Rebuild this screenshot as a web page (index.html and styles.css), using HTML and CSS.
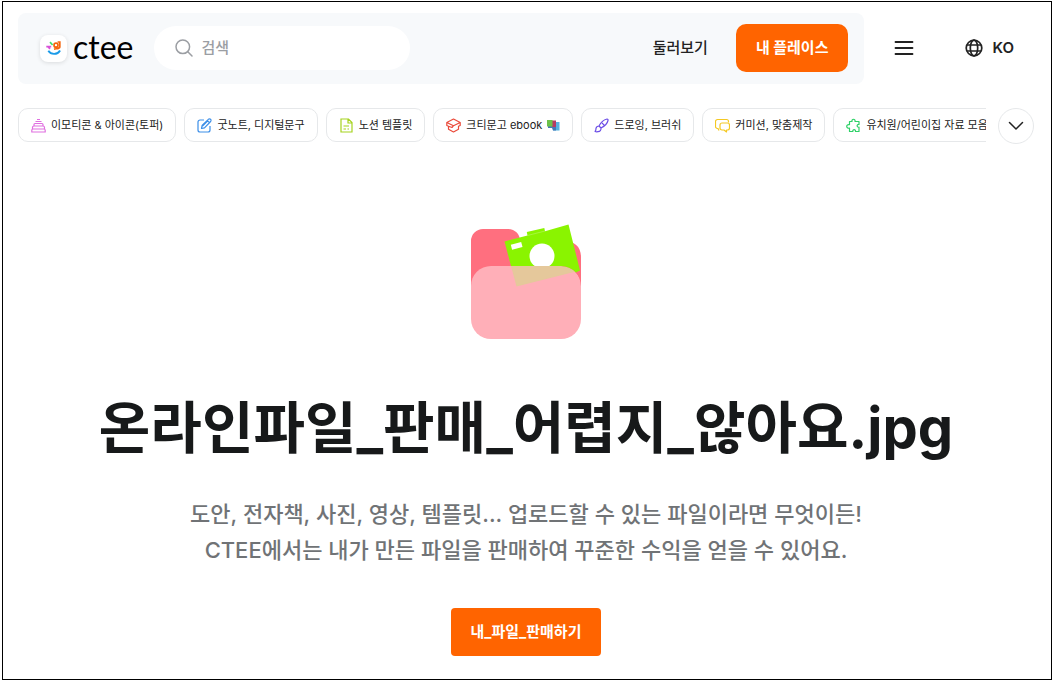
FILE: index.html
```html
<!DOCTYPE html>
<html lang="ko">
<head>
<meta charset="utf-8">
<meta name="viewport" content="width=device-width, initial-scale=1">
<title>CTEE</title>
<link rel="stylesheet" href="styles.css">
</head>
<body>
<div class="page">
  <header class="header">
    <div class="header-panel">
      <a class="logo" href="#">
        <span class="logo-mark">
          <svg width="18" height="18" viewBox="0 0 18 18" fill="none" stroke-width="1.7">
            <path d="M5 3.2 7.6 6" stroke="#3ddc74"/>
            <path d="M1.3 7.7h4.9M3 7.7l2 2.2" stroke="#d851d8"/>
            <circle cx="11" cy="6.2" r="2" stroke="#f4640c"/>
            <path d="M9 10.1c2.5-.6 5.5-.2 5.8-2.1V2.2M12.6 3h2.2" stroke="#f4640c"/>
            <path d="M3.3 11.8c2.7 4.2 9 4.2 11.8-.4" stroke="#1b9be8" stroke-width="1.9"/>
          </svg>
        </span>
        <span class="logo-text">ctee</span>
      </a>
      <label class="search">
        <svg width="18" height="18" viewBox="0 0 18 18" fill="none" stroke="#9b9ea3" stroke-width="1.5" stroke-linecap="round"><circle cx="7.8" cy="7.8" r="6.8"/><path d="m12.8 12.8 4.2 4.2"/></svg>
        <input class="search-input" type="search" placeholder="검색" aria-label="검색">
      </label>
      <nav class="nav">
        <a class="nav-link" href="#">둘러보기</a>
        <button class="place-button" type="button">내 플레이스</button>
      </nav>
    </div>
    <div class="header-tools">
      <button class="icon-button" type="button" aria-label="메뉴">
        <svg width="20" height="16" viewBox="0 0 20 16" stroke="#222" stroke-width="1.8" stroke-linecap="round"><path d="M1.5 2h17M1.5 8h17M1.5 14h17"/></svg>
      </button>
      <button class="language" type="button">
        <svg width="18" height="18" viewBox="0 0 18 18" fill="none" stroke="#222" stroke-width="1.7"><circle cx="9" cy="9" r="7.8"/><ellipse cx="9" cy="9" rx="3.7" ry="7.8"/><path d="M2 6h14M2 12h14"/></svg>
        <span>KO</span>
      </button>
    </div>
  </header>

  <div class="categories">
    <div class="chips">
      <a class="chip" href="#">
        <svg class="chip-icon" viewBox="0 0 15 15" fill="none" stroke="#e070e0" stroke-width="1.200"><path d="M6 1.500h3M4.500 3.500h6M4 5.500h7a1 1 0 0 1 1 1v1.500H3V6.500a1 1 0 0 1 1-1ZM3 8h9a1.500 1.500 0 0 1 1.500 1.500V11h-12V9.500A1.500 1.500 0 0 1 3 8ZM2 11h11a1.200 1.200 0 0 1 1.200 1.200V14H.8v-1.800A1.200 1.200 0 0 1 2 11Z"/></svg>
        <span>이모티콘 &amp; 아이콘(토퍼)</span>
      </a>
      <a class="chip" href="#">
        <svg class="chip-icon" viewBox="0 0 15 15" fill="none" stroke="#3d8fe8" stroke-width="1.200" stroke-linejoin="round"><path d="M7 2H3a2 2 0 0 0-2 2v8a2 2 0 0 0 2 2h8a2 2 0 0 0 2-2V8"/><path d="m4.500 10.500.6-3L11.300 1.300a1.300 1.300 0 0 1 2.300 2.200L7.500 9.800ZM10.200 2.500l2.200 2.200M5.500 8l5-5"/></svg>
        <span>굿노트, 디지털문구</span>
      </a>
      <a class="chip" href="#">
        <svg class="chip-icon" viewBox="0 0 15 15" fill="none" stroke="#a6d31f" stroke-width="1.200"><path d="M2 1h7.500L13 4.500V14H2ZM9 1v4h4M4.500 8h5.500M4.500 11h2.500M8.500 11H10"/></svg>
        <span>노션 템플릿</span>
      </a>
      <a class="chip" href="#">
        <svg class="chip-icon" viewBox="0 0 15 15" fill="none" stroke="#ea4a3a" stroke-width="1.200" stroke-linejoin="round"><path d="M.8 4.500 7.500 1l6.700 3.500-6.700 3.200ZM.8 4.500v3l1.700.8v3l5 2.700 5-2.700v-3l1.700-.8v-3M2.500 8.300l3.500 1.200 1.500-1.800"/></svg>
        <span>크티문고 ebook</span>
        <svg class="chip-books" viewBox="0 0 13 12" role="img" aria-label="책"><path fill="#55b2e0" d="M7 3h5.500v8.500H6z"/><path fill="#4778b5" d="M1 7h8v4.500H6L5 9H1z"/><path fill="#b63c63" d="M4.500 1.500H9V8H5z"/><path fill="#6cc24a" d="M0 1h5.500v6.500H0z"/></svg>
      </a>
      <a class="chip" href="#">
        <svg class="chip-icon" viewBox="0 0 15 15" fill="none" stroke="#6b4de6" stroke-width="1.200" stroke-linejoin="round"><path d="M5 8c1.500-3 5-6.300 8-7 1 .1 1.200.8 1 1.500-.7 3-4 6-7 7.500ZM8 5l2.200 2.200M5 8l2 2c.2 2-1 3.500-3 3.700-1.300.2-2.500 0-3-.4 1.200-.7.700-1.800 1-3C2.300 9 3.500 8 5 8Z"/></svg>
        <span>드로잉, 브러쉬</span>
      </a>
      <a class="chip" href="#">
        <svg class="chip-icon" viewBox="0 0 15 15" fill="none" stroke="#f4c822" stroke-width="1.200" stroke-linejoin="round"><path d="M4 12.500 3 10.500H2.500a2 2 0 0 1-2-2v-5a2 2 0 0 1 2-2h9a2 2 0 0 1 2 2v1"/><path d="M7 5h5.500a2 2 0 0 1 2 2v3a2 2 0 0 1-2 2h-1v2l-2.500-2H7a2 2 0 0 1-2-2V7a2 2 0 0 1 2-2Z"/></svg>
        <span>커미션, 맞춤제작</span>
      </a>
      <a class="chip" href="#">
        <svg class="chip-icon" viewBox="0 0 15 15" fill="none" stroke="#2ed167" stroke-width="1.200" stroke-linejoin="round"><path d="M3.500 3.500H6c-.8-3 3.800-3 3 0h4v3c-2.500-.5-2.500 3.200 0 2.700v4.300H9.500c.4-2.500-3.100-2.500-2.700 0H3.500v-3.300c-3.700.7-3.700-4.300 0-3.500Z"/></svg>
        <span>유치원/어린이집 자료 모음</span>
      </a>
    </div>
    <button class="more-button" type="button" aria-label="더보기">
      <svg width="16" height="10" viewBox="0 0 16 10" fill="none" stroke="#222" stroke-width="1.500" stroke-linecap="round" stroke-linejoin="round"><path d="m1.500 1.500 6.500 6.500 6.500-6.500"/></svg>
    </button>
  </div>

  <main class="hero">
    <svg class="hero-art" width="110" height="116" viewBox="0 0 110 116" aria-hidden="true">
      <path fill="#ff6f7f" d="M0 17A12 12 0 0 1 12 5h24c8 0 13 5 13 12h43c12 0 18 6 18 16v40H0Z"/>
      <path fill="#8af400" d="m33.500 17.500 23-6-.7-3.500 17.500-4 .7 3.200L97.500.5l11.500 46-63.500 16Z"/>
      <path fill="none" stroke="#b8f766" stroke-width=".6" d="m56.500 11.500 17.500-4.500"/>
      <path fill="#fff" d="m39.800 20.700 10.400-2.700 1.300 5-10.400 2.800Z"/>
      <circle cx="71" cy="32" r="12.500" fill="#fff"/>
      <path fill="#ffafb8" d="M20 42h70a20 20 0 0 1 20 20v33a20 20 0 0 1-20 20H20A20 20 0 0 1 0 95V62a20 20 0 0 1 20-20Z"/>
      <path fill="#e5c89b" d="M40 42h67l2 4.500-63.500 16Z"/>
      <path fill="#ff6f7f" d="M90 42h20v20a20 20 0 0 0-20-20Z"/>
      <path fill="#8af400" d="M90 42h17.900l1.100 4.500-4.200 2A20 20 0 0 0 90 42Z"/>
    </svg>
    <h1 class="hero-title">온라인파일_판매_어렵지_않아요.jpg</h1>
    <p class="hero-copy">도안, 전자책, 사진, 영상, 템플릿... 업로드할 수 있는 파일이라면 무엇이든!<br>CTEE에서는 내가 만든 파일을 판매하여 꾸준한 수익을 얻을 수 있어요.</p>
    <button class="sell-button" type="button">내_파일_판매하기</button>
  </main>
</div>
</body>
</html>
```
FILE: styles.css
```css
* { box-sizing: border-box; }

body {
  margin: 1px 1px 1px 2px;
  background: #fff;
  color: #222;
  font-family: Inter, "Noto Sans CJK KR", sans-serif;
}

button {
  margin: 0;
  padding: 0;
  border: 0;
  background: none;
  color: inherit;
  font: inherit;
  cursor: pointer;
}

a { color: inherit; text-decoration: none; }
svg { display: block; flex-shrink: 0; }

.page {
  min-height: calc(100vh - 2px);
  border: 1px solid #000;
  padding: 11px 17px 23px 15px;
}

.header { display: flex; align-items: center; }

.header-panel {
  flex: 1;
  display: flex;
  align-items: center;
  padding: 11px 16px 12px 22px;
  border-radius: 8px;
  background: #f7f9fb;
}

.logo { display: flex; align-items: center; gap: 6px; }

.logo-mark {
  display: grid;
  place-items: center;
  width: 27px;
  height: 27px;
  border-radius: 8px;
  background: #fff;
  box-shadow: 0 1px 4px rgba(0, 0, 0, 0.12);
}

.logo-text {
  padding-bottom: 2px;
  color: #000;
  font: 32px/40px Lato, sans-serif;
}

.search {
  display: flex;
  align-items: center;
  gap: 8px;
  width: 256px;
  height: 44px;
  margin-left: 21px;
  padding: 0 21px;
  border-radius: 22px;
  background: #fff;
}

.search-input {
  flex: 1;
  min-width: 0;
  padding: 0;
  border: 0;
  outline: 0;
  background: none;
  font: 500 15px/24px Inter, "Noto Sans CJK KR", sans-serif;
}

.search-input::placeholder { color: #9b9ea3; opacity: 1; }

.nav {
  display: flex;
  align-items: center;
  gap: 28px;
  margin-left: auto;
  font-size: 15px;
  line-height: 24px;
}

.nav-link { font-weight: 500; }

.place-button {
  height: 48px;
  padding: 0 20px;
  border-radius: 10px;
  background: #ff6400;
  color: #fff;
  font-weight: 700;
}

.header-tools {
  display: flex;
  align-items: center;
  gap: 51px;
  padding: 0 20px 2px 30px;
}

.language {
  display: flex;
  align-items: center;
  gap: 9px;
  font-size: 15px;
  line-height: 24px;
  font-weight: 600;
}

.categories {
  display: flex;
  align-items: flex-start;
  gap: 12px;
  margin-top: 24px;
}

.chips {
  flex: 1;
  min-width: 0;
  display: flex;
  gap: 8px;
  overflow: hidden;
}

.chip {
  flex: none;
  display: flex;
  align-items: center;
  gap: 5px;
  height: 34px;
  padding: 0 12px;
  border: 1px solid #e6e8ea;
  border-radius: 10px;
  font-size: 11px;
  line-height: 18px;
  white-space: nowrap;
}

.chip-icon { width: 15px; height: 15px; }
.chip-books { width: 13px; height: 12px; }

.more-button {
  display: grid;
  place-items: center;
  width: 36px;
  height: 36px;
  border: 1px solid #e6e8ea;
  border-radius: 50%;
}

.hero {
  display: flex;
  flex-direction: column;
  align-items: center;
  padding-top: 80px;
  text-align: center;
}

.hero-title {
  margin: 52px 0 0;
  color: #17191a;
  font-size: 56px;
  line-height: 72px;
  font-weight: 700;
}

.hero-copy {
  margin: 32px 0 0;
  color: #707376;
  font-size: 22px;
  line-height: 36px;
  font-weight: 500;
}

.sell-button {
  height: 48px;
  margin-top: 40px;
  padding: 0 20px 4px;
  border-radius: 4px;
  background: #ff6400;
  color: #fff;
  font-size: 15px;
  font-weight: 700;
}
```
